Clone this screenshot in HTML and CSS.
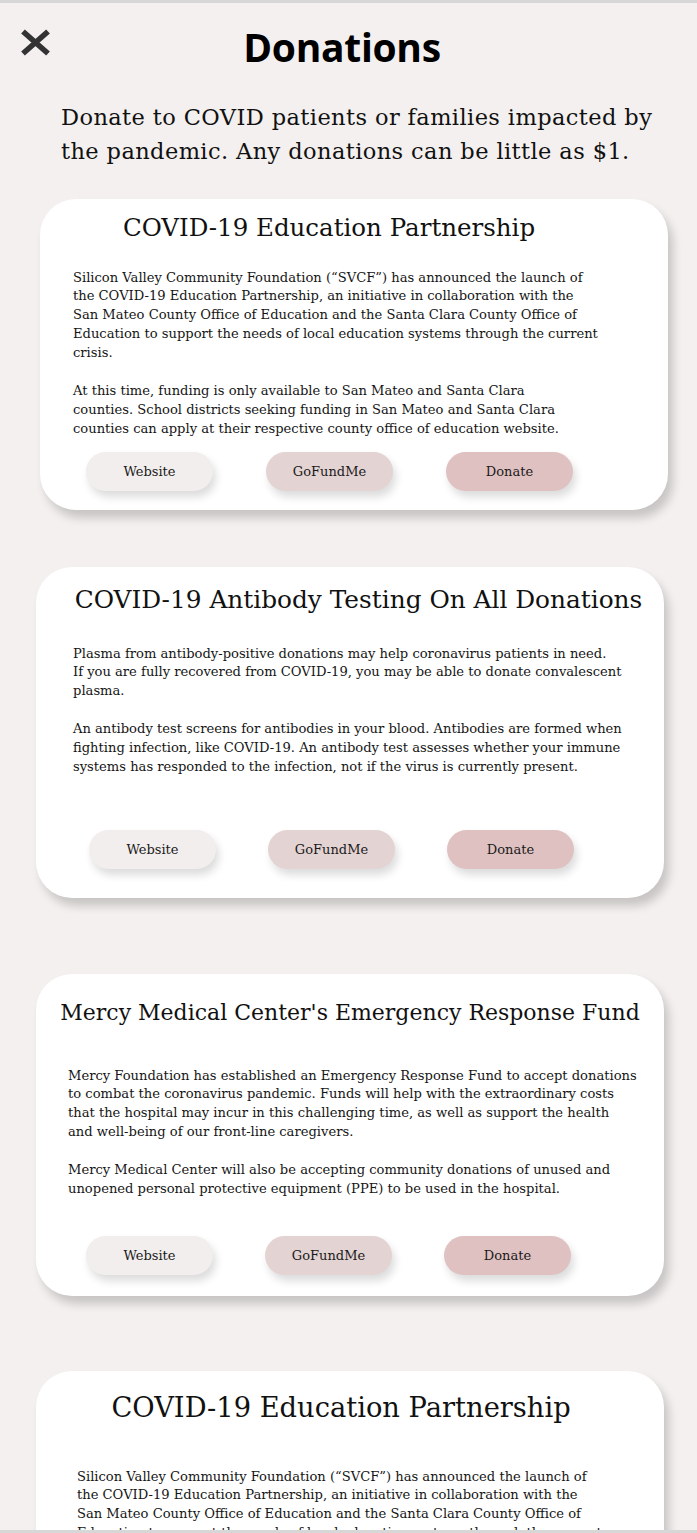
FILE: index.html
```html
<!DOCTYPE html>
<html lang="en">
<head>
<meta charset="utf-8">
<title>Donations</title>
<link rel="stylesheet" href="styles.css">
</head>
<body>
<header class="header">
  <button class="close" aria-label="Close">
    <svg width="31" height="27" viewBox="0 0 31 27"><path d="M3 2.5 L28 24.5 M28 2.5 L3 24.5" stroke="#333" stroke-width="5.6" fill="none"/></svg>
  </button>
  <h1 class="title">Donations</h1>
  <span></span>
</header>
<p class="intro">Donate to COVID patients or families impacted by<br>the pandemic. Any donations can be little as $1.</p>

<main class="list">
  <section class="card card-1">
    <h2 class="card-title">COVID-19 Education Partnership</h2>
    <div class="card-body">
      <p>Silicon Valley Community Foundation (“SVCF”) has announced the launch of<br>the COVID-19 Education Partnership, an initiative in collaboration with the<br>San Mateo County Office of Education and the Santa Clara County Office of<br>Education to support the needs of local education systems through the current<br>crisis.</p>
      <p>At this time, funding is only available to San Mateo and Santa Clara<br>counties. School districts seeking funding in San Mateo and Santa Clara<br>counties can apply at their respective county office of education website.</p>
    </div>
    <div class="actions">
      <a class="btn btn-web">Website</a>
      <a class="btn btn-gfm">GoFundMe</a>
      <a class="btn btn-donate">Donate</a>
    </div>
  </section>

  <section class="card card-2">
    <h2 class="card-title">COVID-19 Antibody Testing On All Donations</h2>
    <div class="card-body">
      <p>Plasma from antibody-positive donations may help coronavirus patients in need.<br>If you are fully recovered from COVID-19, you may be able to donate convalescent<br>plasma.</p>
      <p>An antibody test screens for antibodies in your blood. Antibodies are formed when<br>fighting infection, like COVID-19. An antibody test assesses whether your immune<br>systems has responded to the infection, not if the virus is currently present.</p>
    </div>
    <div class="actions">
      <a class="btn btn-web">Website</a>
      <a class="btn btn-gfm">GoFundMe</a>
      <a class="btn btn-donate">Donate</a>
    </div>
  </section>

  <section class="card card-3">
    <h2 class="card-title">Mercy Medical Center's Emergency Response Fund</h2>
    <div class="card-body">
      <p>Mercy Foundation has established an Emergency Response Fund to accept donations<br>to combat the coronavirus pandemic. Funds will help with the extraordinary costs<br>that the hospital may incur in this challenging time, as well as support the health<br>and well-being of our front-line caregivers.</p>
      <p>Mercy Medical Center will also be accepting community donations of unused and<br>unopened personal protective equipment (PPE) to be used in the hospital.</p>
    </div>
    <div class="actions">
      <a class="btn btn-web">Website</a>
      <a class="btn btn-gfm">GoFundMe</a>
      <a class="btn btn-donate">Donate</a>
    </div>
  </section>

  <section class="card card-4">
    <h2 class="card-title">COVID-19 Education Partnership</h2>
    <div class="card-body">
      <p>Silicon Valley Community Foundation (“SVCF”) has announced the launch of<br>the COVID-19 Education Partnership, an initiative in collaboration with the<br>San Mateo County Office of Education and the Santa Clara County Office of<br>Education to support the needs of local education systems through the current<br>crisis.</p>
      <p>At this time, funding is only available to San Mateo and Santa Clara<br>counties. School districts seeking funding in San Mateo and Santa Clara<br>counties can apply at their respective county office of education website.</p>
    </div>
    <div class="actions">
      <a class="btn btn-web">Website</a>
      <a class="btn btn-gfm">GoFundMe</a>
      <a class="btn btn-donate">Donate</a>
    </div>
  </section>
</main>
<div class="bottom-edge"></div>
</body>
</html>
```

FILE: styles.css
```css
html, body {
  margin: 0;
  padding: 0;
}
body {
  background: #f3f0ef;
  border-top: 3px solid #d7d7d7;
  font-family: "DejaVu Serif", serif;
  color: #111;
  overflow: hidden;
}
.header {
  display: grid;
  grid-template-columns: 1fr auto 1fr;
  padding: 18px 13px 0 0;
}
.close {
  justify-self: start;
  align-self: start;
  margin: 8px 0 0 20px;
  padding: 0;
  border: 0;
  background: none;
  width: 31px;
  height: 27px;
  display: block;
}
.close svg { display: block; }
.title {
  margin: 0;
  font-family: "Open Sans", sans-serif;
  font-weight: 700;
  font-size: 39px;
  letter-spacing: -0.3px;
  line-height: 52px;
  color: #000;
}
.intro {
  margin: 27px 0 0 61px;
  font-size: 22.5px;
  letter-spacing: 0.4px;
  line-height: 34px;
  color: #111;
  white-space: nowrap;
}
.list {
  display: flex;
  flex-direction: column;
  padding-bottom: 60px;
}
.card {
  background: #fff;
  border-radius: 36px;
  box-shadow: 5px 8px 10px rgba(0, 0, 0, 0.18);
  width: 628px;
  box-sizing: border-box;
  margin-left: 36px;
}
.card-title {
  margin: 0;
  display: flex;
  justify-content: center;
  font-weight: 400;
  font-size: 24.5px;
  line-height: 30px;
  white-space: nowrap;
  color: #111;
}
.card-body {
  font-size: 13.1px;
  line-height: 18.9px;
  white-space: nowrap;
  color: #151515;
}
.card-body p { margin: 0; }
.card-body p + p { margin-top: 18.9px; }
.actions {
  display: flex;
  gap: 52px;
}
.btn {
  width: 127px;
  height: 39px;
  border-radius: 20px;
  display: flex;
  align-items: center;
  justify-content: center;
  font-size: 13px;
  color: #1a1a1a;
  box-shadow: 3px 6px 8px rgba(0, 0, 0, 0.14);
  cursor: pointer;
}
.btn-web { background: #f2eeed; }
.btn-gfm { background: #e4d3d3; }
.btn-donate { background: #e0c1c1; }

.card-1 {
  margin-top: 31px;
  margin-left: 40px;
  padding: 14px 83px 19px 33px;
}
.card-1 .card-body { margin-top: 25.5px; }
.card-1 .actions { margin-top: 13.4px; padding-left: 13px; gap: 53px; }

.card-2 {
  margin-top: 57px;
  padding: 18px 20px 29px 37px;
}
.card-2 .card-title { font-size: 24.8px; }
.card-2 .card-body { margin-top: 29.5px; }
.card-2 .actions { margin-top: 53.2px; padding-left: 16px; }

.card-3 {
  margin-top: 76px;
  padding: 24px 32px 21px 32px;
}
.card-3 .card-title { font-size: 22px; }
.card-3 .card-body { margin-top: 38.5px; }
.card-3 .actions { margin-top: 37.2px; padding-left: 18px; }

.card-4 {
  margin-top: 75px;
  padding: 19.5px 59px 21px 41px;
}
.card-4 .card-title { font-size: 27.3px; line-height: 33px; }
.card-4 .card-body { margin-top: 44px; }
.card-4 .actions { margin-top: 13.4px; padding-left: 13px; }

.bottom-edge {
  position: fixed;
  left: 0;
  right: 0;
  bottom: 0;
  height: 3px;
  background: #d7d7d7;
}
```
